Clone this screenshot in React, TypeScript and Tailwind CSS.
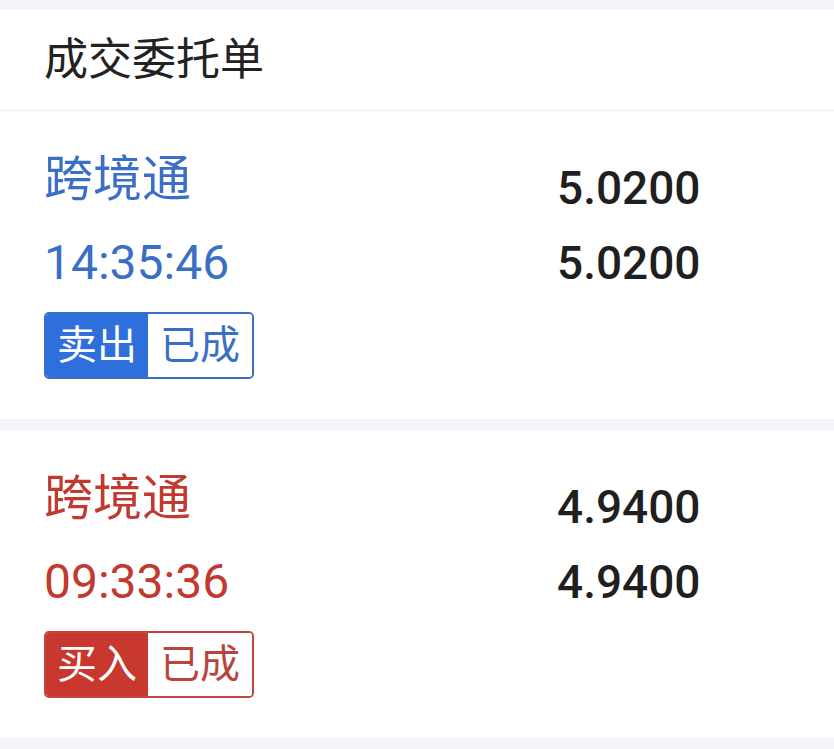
import React from 'react';

interface Order {
  name: string;
  time: string;
  price: string;
  filled: string;
  side: string;
  status: string;
  tone: 'buy' | 'sell';
}

const orders: Order[] = [
  { name: '跨境通', time: '14:35:46', price: '5.0200', filled: '5.0200', side: '卖出', status: '已成', tone: 'sell' },
  { name: '跨境通', time: '09:33:36', price: '4.9400', filled: '4.9400', side: '买入', status: '已成', tone: 'buy' },
];

const font = { fontFamily: 'Roboto, "Noto Sans CJK SC", sans-serif' };

const OrderCard: React.FC<{ order: Order }> = ({ order }) => {
  const sell = order.tone === 'sell';
  return (
    <div className="bg-white flex px-[44px] pt-[41px] pb-[40px]">
      <div className="w-[513px] flex flex-col items-start">
        <div className={`h-[56px] leading-[56px] text-[49px] ${sell ? 'text-[#3b6fc6]' : 'text-[#c2392f]'}`}>
          {order.name}
        </div>
        <div className={`mt-[27px] h-[56px] leading-[56px] text-[48px] ${sell ? 'text-[#3b6fc6]' : 'text-[#c2392f]'}`}>
          {order.time}
        </div>
        <div
          className={`mt-[21px] h-[67px] flex rounded-[5px] border-2 overflow-hidden ${
            sell ? 'border-[#3a70c4]' : 'border-[#c8453d]'
          }`}
        >
          <div
            className={`w-[102px] flex items-center justify-center text-white text-[40px] ${
              sell ? 'bg-[#2f6fdc]' : 'bg-[#c8382e]'
            }`}
          >
            {order.side}
          </div>
          <div
            className={`w-[104px] flex items-center justify-center bg-white text-[40px] ${
              sell ? 'text-[#3a70c4]' : 'text-[#b8453d]'
            }`}
          >
            {order.status}
          </div>
        </div>
      </div>
      <div className="flex flex-col pt-[8px] font-medium text-[#1f1f1f] text-[46px]">
        <div className="h-[56px] leading-[56px]">{order.price}</div>
        <div className="mt-[19px] h-[56px] leading-[56px]">{order.filled}</div>
      </div>
    </div>
  );
};

export default function App() {
  return (
    <div className="w-[834px] h-[749px] overflow-hidden bg-[#f4f5f8] pt-[10px]" style={font}>
      <div className="bg-white h-[101px] px-[44px] flex items-center border-b border-[#ececec]">
        <span className="text-[44px] text-[#222222]">成交委托单</span>
      </div>
      <div className="flex flex-col gap-[11px]">
        {orders.map((o, i) => (
          <OrderCard key={i} order={o} />
        ))}
      </div>
    </div>
  );
}
